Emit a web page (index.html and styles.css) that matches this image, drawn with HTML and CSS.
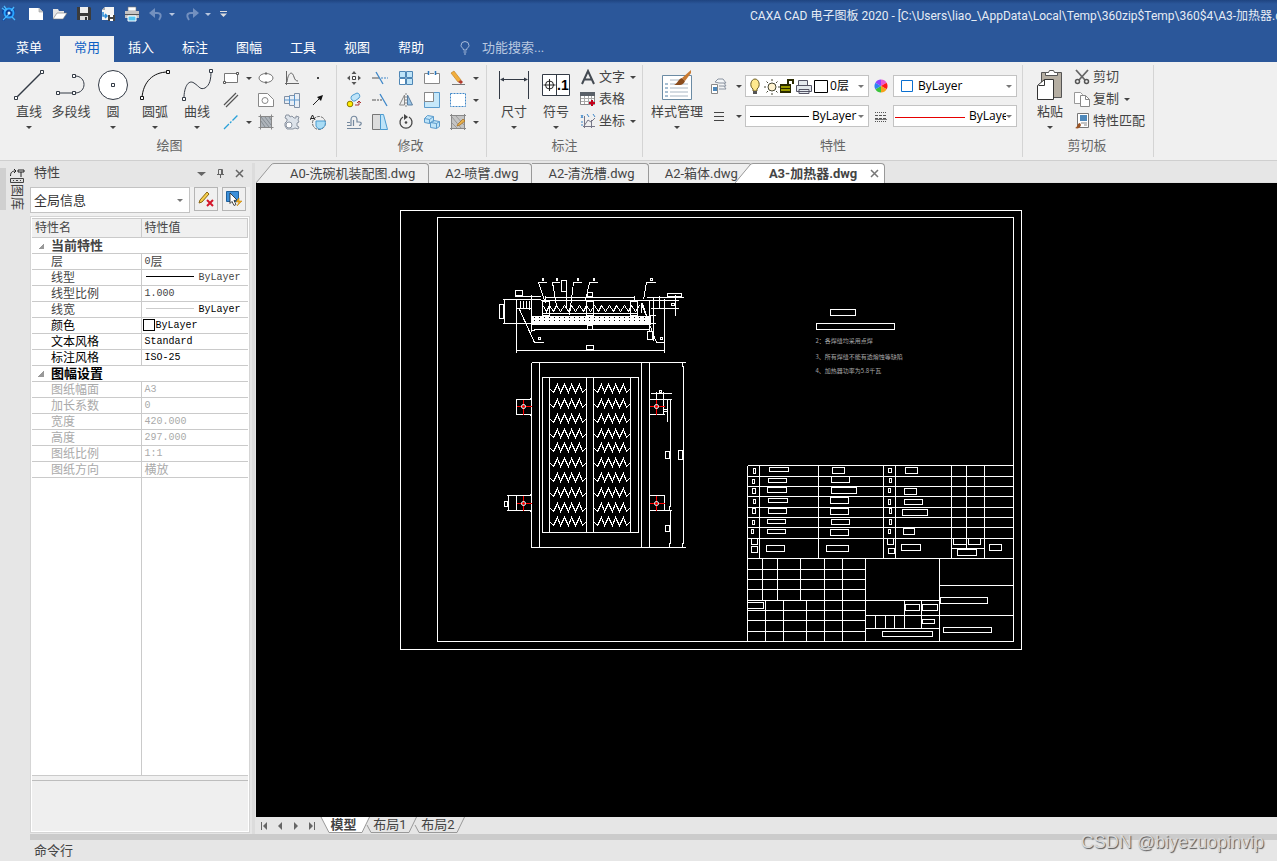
FILE: index.html
```
<!DOCTYPE html>
<html lang="zh-CN">
<head>
  <meta charset="UTF-8">
  <meta name="viewport" content="width=device-width, initial-scale=1.0">
  <title>CAXA CAD 电子图板 2020</title>
  <link rel="stylesheet" href="styles.css">
</head>
<body>
<header class="topbar">
  <div class="titlebar">
    <div class="quick">
      <svg class="logo" width="18" height="18" viewBox="0 0 18 18"><path d="M3 3l4 1c4-3 8-1 8 3s-4 6-7 4L4 16l-2-1 3-4L2 8z" fill="#0b3f9a"/><circle cx="9" cy="8" r="4.500" fill="none" stroke="#2aa5ff" stroke-width="2"/><path d="M2 3l4 3M4 1l3 4M14 2l-3 4M3 15l6-6M12 12l3 3" stroke="#49b8ff" stroke-width="1.300"/><circle cx="9" cy="8" r="1.500" fill="#d5efff"/></svg>
      <button aria-label="新建"><svg width="16" height="16" viewBox="0 0 16 16"><path d="M1 2h10l4 4v8H1z" fill="#fff"/><path d="M11 2v4h4" fill="#ccc" stroke="#999" stroke-width=".6"/></svg></button>
      <button aria-label="打开"><svg width="16" height="16" viewBox="0 0 16 16"><path d="M1 13V3h5l1 2h5v3" fill="#e5e5e5"/><path d="M1 13l4-6h10l-4 6z" fill="#fff" stroke="#777" stroke-width=".6"/></svg></button>
      <button aria-label="保存"><svg width="16" height="16" viewBox="0 0 16 16"><path d="M1 1h13l1 1v12H1z" fill="#3b3b3b"/><path d="M4 1h8v6H4z" fill="#eee"/><path d="M4 10h8v4H4z" fill="#ddd"/><path d="M9 11h2v3H9z" fill="#333"/></svg></button>
      <button aria-label="另存为"><svg width="16" height="16" viewBox="0 0 16 16"><path d="M5 1h9v13H2V4z" fill="#f4f4f4"/><path d="M5 1v3H2" fill="#aaa"/><path d="M3 6v4h4M5 8l2 2-2 2" fill="none" stroke="#2a8bd8" stroke-width="1.500"/><path d="M8 9h7v6H8z" fill="#444"/><path d="M10 9h3v2h-3zM10 13h3v2h-3z" fill="#fff"/></svg></button>
      <button aria-label="打印"><svg width="16" height="16" viewBox="0 0 16 16"><path d="M4 1h8v4H4z" fill="#fff" stroke="#777" stroke-width=".6"/><path d="M1 5h14v7H1z" fill="#c4c4c4"/><path d="M1 8h14v1H1z" fill="#555"/><path d="M4 10h8v5H4z" fill="#53c6f2" stroke="#fff"/></svg></button>
      <button aria-label="撤销" class="dim"><svg width="16" height="16" viewBox="0 0 16 16"><path d="M7 2L1 7l6 5z" fill="#7390bf"/><path d="M5 7h4c4 0 5 3 2 7" fill="none" stroke="#7390bf" stroke-width="2"/></svg><i class="caret"></i></button>
      <button aria-label="重做" class="dim"><svg width="16" height="16" viewBox="0 0 16 16"><path d="M9 2l6 5-6 5z" fill="#7390bf"/><path d="M11 7H7c-4 0-5 3-2 7" fill="none" stroke="#7390bf" stroke-width="2"/></svg><i class="caret"></i></button>
      <button aria-label="自定义" class="more"><svg width="7" height="7" viewBox="0 0 7 7"><path d="M0 .5h7" stroke="#ddd"/><path d="M0 2.500h7L3.500 6z" fill="#ddd"/></svg></button>
    </div>
    <div class="title">CAXA CAD 电子图板 2020 - [C:\Users\liao_\AppData\Local\Temp\360zip$Temp\360$4\A3-加热器.dwg]</div>
  </div>
  <nav class="menu">
    <button class="menu-file">菜单</button>
    <button class="active">常用</button>
    <button>插入</button>
    <button>标注</button>
    <button>图幅</button>
    <button>工具</button>
    <button>视图</button>
    <button>帮助</button>
    <label class="search">
      <svg width="10" height="14" viewBox="0 0 10 14"><path d="M3.500 9C3.500 7 1 6.500 1 4.500a4 4 0 0 1 8 0C9 6.500 6.500 7 6.500 9zM3.500 11h3M4 13h2" fill="none" stroke="#a9bddc"/></svg>
      <input type="text" placeholder="功能搜索..." aria-label="功能搜索">
    </label>
  </nav>
</header>

<section class="ribbon">
  <div class="group group-draw">
    <div class="tools">
      <button class="big"><svg width="32" height="32" viewBox="0 0 32 32"><path d="M3 29L29 3" stroke="#333a45" stroke-width="1.500"/><g fill="#fff" stroke="#333a45"><path d="M1.500 27.500h3v3h-3zM27.500 1.500h3v3h-3z"/></g></svg>直线<i class="caret"></i></button>
      <button class="big"><svg width="32" height="32" viewBox="0 0 32 32"><path d="M3 24h17c12 0 12-17 0-17" fill="none" stroke="#333a45"/><g fill="#fff" stroke="#333a45"><path d="M1.500 22.500h3v3h-3zM17.500 22.500h3v3h-3zM17.500 5.500h3v3h-3z"/></g></svg>多段线</button>
      <button class="big"><svg width="32" height="32" viewBox="0 0 32 32"><circle cx="16" cy="16" r="14.500" fill="#fff" stroke="#333a45"/><path d="M14.500 14.500h3v3h-3z" fill="#fff" stroke="#333a45"/></svg>圆<i class="caret"></i></button>
      <button class="big"><svg width="32" height="32" viewBox="0 0 32 32"><path d="M3 29C4 13 14 3 29 3" fill="none" stroke="#111"/><g fill="#fff" stroke="#111"><path d="M1.500 27.500h3v3h-3zM27.500 1.500h3v3h-3z"/></g></svg>圆弧<i class="caret"></i></button>
      <button class="big"><svg width="32" height="32" viewBox="0 0 32 32"><path d="M3 29C3 19 7 10 13 14c6 4 6 7 11 5 5-3 6-9 6-17" fill="none" stroke="#333a45"/><g fill="#fff" stroke="#333a45"><path d="M1.500 28.500h3v3h-3zM28.500 .5h3v3h-3z"/></g></svg>曲线<i class="caret"></i></button>
      <div class="grid-draw">
        <button aria-label="矩形"><svg width="16" height="16" viewBox="0 0 16 16"><path d="M1.500 3.500h13v9h-13z" fill="#fff" stroke="#777"/><path d="M.5 11.500h2v2h-2zM13.500 2.500h2v2h-2z" fill="#fff" stroke="#555"/></svg></button>
        <i class="caret"></i>
        <button aria-label="椭圆"><svg width="16" height="16" viewBox="0 0 16 16"><ellipse cx="8" cy="8" rx="7" ry="4.500" fill="#fff" stroke="#777"/><path d="M7 2.500h2v2H7zM7 11.500h2v2H7z" fill="#666"/></svg></button>
        <button aria-label="公式曲线"><svg width="16" height="16" viewBox="0 0 16 16"><path d="M2.500 1v14M1 13.500h14M3 12c1-9 5-12 7-5 1 3 2 4 4 4" fill="none" stroke="#666"/></svg></button>
        <button aria-label="点"><svg width="16" height="16" viewBox="0 0 16 16"><path d="M7 7h2v2H7z" fill="#444"/></svg></button>
        <button aria-label="平行线"><svg width="16" height="16" viewBox="0 0 16 16"><path d="M1 13L13 1M3 15L15 3" stroke="#555" stroke-width="1.200"/></svg></button>
        <i></i>
        <button aria-label="孔"><svg width="16" height="16" viewBox="0 0 16 16"><path d="M.5 1.500h9l6 6v7H.5z" fill="#fff" stroke="#888"/><circle cx="7" cy="8.500" r="3" fill="#fff" stroke="#888"/></svg></button>
        <button aria-label="轴"><svg width="16" height="16" viewBox="0 0 16 16"><path d="M.5 4.500h5v-1h5v-2h5v14h-5v-2h-5v-2h-5z" fill="#e8eef5" stroke="#8190a5"/><path d="M5.500 4v8M10.500 3v10M0 8h16" stroke="#5b95cb"/></svg></button>
        <button aria-label="箭头"><svg width="16" height="16" viewBox="0 0 16 16"><path d="M3 13l8-8" stroke="#222"/><path d="M13 3l-2 6-4-4z" fill="#111"/></svg></button>
        <button aria-label="中心线"><svg width="16" height="16" viewBox="0 0 16 16"><path d="M1 15L15 1" stroke="#2aa1d9" stroke-width="1.300" stroke-dasharray="7 1.500 2 1.500"/></svg></button>
        <i class="caret"></i>
        <button aria-label="剖面线"><svg width="16" height="16" viewBox="0 0 16 16"><path d="M2.500 2.500h11v11h-11z" fill="#aeb4ba"/><path d="M.5 2.500h15M.5 13.500h15M2.500 .5v15M13.500 .5v15" stroke="#888"/><path d="M3 7l4 6M3 3l8 10M7 3l6 8M11 3l2 3" stroke="#747b83" stroke-width=".7"/></svg></button>
        <button aria-label="齿轮"><svg width="16" height="16" viewBox="0 0 16 16"><path d="M2 1h3l1 2 2-1 2 2 2 0 0-2 3 1-1 3 1 2-2 1 0 3 2 1-1 2-3-1-2 1H3l-2-3 0-3 2-2V5L1 4z" fill="#dde3ea" stroke="#8a93a0"/><circle cx="5" cy="11" r="3" fill="#fff" stroke="#8a93a0"/></svg></button>
        <button aria-label="局部放大"><svg width="16" height="16" viewBox="0 0 16 16"><circle cx="9" cy="9" r="6.500" fill="none" stroke="#666" stroke-dasharray="3 1"/><path d="M6 7h9a6 6 0 0 1-6 8 5 5 0 0 1-3-3z" fill="#a9dcf5" stroke="#4b9bd0"/><path d="M0 6l2.500-5L5 6M1 4.500h3" fill="none" stroke="#222"/></svg></button>
      </div>
    </div>
    <div class="group-name">绘图</div>
  </div>

  <div class="group group-modify">
    <div class="tools">
      <div class="grid-modify">
        <button aria-label="平移"><svg width="16" height="16" viewBox="0 0 16 16"><path d="M6.500 6.500h3v3h-3z" fill="#fff" stroke="#444"/><path d="M8 1l2.500 3h-5zM8 15l2.500-3h-5zM1 8l3-2.500v5zM15 8l-3-2.500v5z" fill="#555"/></svg></button>
        <button aria-label="裁剪"><svg width="16" height="16" viewBox="0 0 16 16"><path d="M0 8h7" stroke="#555"/><path d="M9 8h7" stroke="#3e87c9" stroke-dasharray="2 1"/><path d="M4 2l7 12" stroke="#3e87c9" stroke-width="1.300"/></svg></button>
        <button aria-label="阵列"><svg width="16" height="16" viewBox="0 0 16 16"><g fill="#bfe4f8" stroke="#4e86b5"><path d="M1.500 1.500h6v6h-6zM8.500 1.500h6v6h-6zM8.500 8.500h6v6h-6z"/><path d="M1.500 8.500h6v6h-6z" fill="#fff"/></g></svg></button>
        <button aria-label="打断"><svg width="16" height="16" viewBox="0 0 16 16"><path d="M4 3.500H.5v10h15v-10H12M6 3.500h4" fill="#fff" stroke="#888"/><path d="M4.500 1v4M11.500 1v4" stroke="#2b77bd" stroke-width="1.500"/></svg></button>
        <button aria-label="删除"><svg width="16" height="16" viewBox="0 0 16 16"><path d="M1 3l3-2 7 9-3 2z" fill="#f2ae3c" stroke="#b9781d" stroke-width=".6"/><path d="M8 12l3-2 2 2-2 2z" fill="#b23a2d"/><path d="M2 14.500h13" stroke="#777"/></svg></button>
        <i class="caret"></i>
        <button aria-label="复制"><svg width="16" height="16" viewBox="0 0 16 16"><circle cx="4" cy="12" r="2.800" fill="#ffeb00" stroke="#8a7a00"/><path d="M6 8a3 3 0 0 1 1-5l4-2a3 3 0 0 1 2 5L9 9a3 3 0 0 1-3-1z" fill="#bfe4f8" stroke="#4b9bd0"/><path d="M9 13h4v-3M11 11l2-2 2 2" fill="none" stroke="#a33"/></svg></button>
        <button aria-label="延伸"><svg width="16" height="16" viewBox="0 0 16 16"><path d="M0 8h4" stroke="#555"/><path d="M5 8h5" stroke="#555" stroke-dasharray="2 1"/><path d="M8 2l7 12" stroke="#3e87c9" stroke-width="1.300"/></svg></button>
        <button aria-label="镜像"><svg width="16" height="16" viewBox="0 0 16 16"><path d="M6.500 3v10h-5z" fill="#eee" stroke="#888"/><path d="M9.500 3v10h5z" fill="#9cc6e8" stroke="#5b7fa0"/><path d="M8 1v14" stroke="#888" stroke-dasharray="2 1"/></svg></button>
        <button aria-label="缩放"><svg width="16" height="16" viewBox="0 0 16 16"><path d="M.5 .5h15v15H.5z" fill="#c6e8fa" stroke="#5b9bcc"/><path d="M.5 .5h9v9h-9z" fill="#fff" stroke="#888"/></svg></button>
        <button aria-label="选择"><svg width="16" height="16" viewBox="0 0 16 16"><path d="M.5 1.500h15v13H.5z" fill="#fff" stroke="#3e87c9" stroke-dasharray="2 1"/></svg></button>
        <i class="caret"></i>
        <button aria-label="等距线"><svg width="16" height="16" viewBox="0 0 16 16"><path d="M1 11.500h4V6c0-5 6-5 6 0v2h2c3 0 3 3 0 3.500M1 14.500h14M1 8.500h3M7.500 12V6" fill="none" stroke="#74889e" stroke-width="1.200"/></svg></button>
        <button aria-label="拉伸"><svg width="16" height="16" viewBox="0 0 16 16"><path d="M.5 .5h8v15h-8z" fill="#ddd" stroke="#777"/><path d="M8.500 .5h3l4 15h-7z" fill="#bfe4f8" stroke="#4b9bd0"/></svg></button>
        <button aria-label="旋转"><svg width="16" height="16" viewBox="0 0 16 16"><path d="M5 3a6 6 0 1 0 6 0" fill="none" stroke="#444" stroke-width="1.300"/><path d="M6 0l4 3-4 3z" fill="#444"/><circle cx="8" cy="8.500" r="1.300" fill="#444"/></svg></button>
        <button aria-label="分解"><svg width="16" height="16" viewBox="0 0 16 16"><path d="M.5 4.500l3-3 6 1v5l-4 2-5-1zM.5 4.500l5 1v4M5.500 5.500l4-3M6.500 8.500l3-2 6 1v5l-3 2-6-1zM6.500 8.500l6 1v5M12.500 9.500l3-2" fill="#bfe4f8" stroke="#5b9bcc"/></svg></button>
        <button aria-label="填充编辑"><svg width="16" height="16" viewBox="0 0 16 16"><path d="M1.500 1.500h13v13h-13z" fill="#c4c4c4"/><path d="M0 1.500h16M0 14.500h16M1.500 0v16M14.500 0v16" stroke="#888"/><path d="M2 9l5 5M2 3l9 11M6 2l8 9" stroke="#888" stroke-width=".7"/><path d="M8 10l5-5 2 2-5 4-3 1z" fill="#e6b04c" stroke="#a56c1d" stroke-width=".7"/></svg></button>
        <i class="caret"></i>
      </div>
    </div>
    <div class="group-name">修改</div>
  </div>

  <div class="group group-dim">
    <div class="tools">
      <button class="big"><svg width="32" height="32" viewBox="0 0 32 32"><path d="M1.500 2v28M30.500 2v28" stroke="#333a45"/><path d="M3 10.500h26" stroke="#333a45"/><path d="M2 10.500l4-2v4zM30 10.500l-4-2v4z" fill="#333a45"/></svg>尺寸<i class="caret"></i></button>
      <button class="big"><svg width="32" height="32" viewBox="0 0 32 32"><path d="M2.500 5.500h27v21h-27zM16.500 5.500v21" fill="#fff" stroke="#333a45"/><circle cx="9.500" cy="16" r="4" fill="none" stroke="#222"/><path d="M9.500 10v12M3.500 16h12" stroke="#222"/><text x="17" y="21" class="icon-text">.1</text></svg>符号<i class="caret"></i></button>
      <div class="list">
        <button><svg width="16" height="16" viewBox="0 0 16 16"><path d="M2 15L8 2l6 13M4.500 10.500h7" fill="none" stroke="#444a52" stroke-width="2"/></svg>文字<i class="caret"></i></button>
        <button><svg width="16" height="16" viewBox="0 0 16 16"><path d="M.5 1.500h14v12H.5z" fill="#fff" stroke="#888"/><path d="M0 1h15v4H0z" fill="#5a6068"/><path d="M1 7.500h13M1 10.500h13M4.500 5v8M8.500 5v8M11.500 5v8" stroke="#aaa"/><path d="M12 9v6M9 12h6" stroke="#c4001a" stroke-width="2"/></svg>表格</button>
        <button><svg width="16" height="16" viewBox="0 0 16 16"><path d="M4.500 3v12M3 13.500h12M4 13l4-6 3 2 4-4M11.500 7v8" fill="none" stroke="#778"/><path d="M1 2l2 3M3 2L1 5M7 1l2 3M13 1l2 3M1 9h2M1 12h2" stroke="#3e87c9"/></svg>坐标<i class="caret"></i></button>
      </div>
    </div>
    <div class="group-name">标注</div>
  </div>

  <div class="group group-props">
    <div class="tools">
      <button class="big wide"><svg width="32" height="32" viewBox="0 0 32 32"><path d="M1.500 6.500h29v24h-29z" fill="#fff" stroke="#6b8ba4"/><path d="M4 15h3M4 19h3M4 23h3M4 27h3" stroke="#4f7fa6"/><path d="M9 11h14M9 15h18M9 19h18M9 23h18M9 27h18" stroke="#a9b6c3"/><path d="M30 1l-9 8 3 3 6-8z" fill="#c87a32"/><path d="M21 9l3 3c-2 5-6 4-11 4 4-2 4-6 8-7z" fill="#8a4b1c"/></svg>样式管理<i class="caret"></i></button>
      <div class="grid-props">
        <button aria-label="图层"><svg width="16" height="16" viewBox="0 0 16 16"><path d="M4 4l3-3h5l3 4H8zM8 8h7l-2-3M8 11h7l-2-3" fill="#f4f6f8" stroke="#8a93a0"/><path d="M.5 6.500h6v9h-6z" fill="#fff" stroke="#888"/><path d="M2 9h4v4H2z" fill="#4d88bb"/></svg></button>
        <i class="caret"></i>
        <div class="combo">
          <svg width="84" height="18" viewBox="0 0 84 18"><path d="M7 14V12C3 9 5 2 9 2s6 7 2 10v2z" fill="#ffe98e" stroke="#6b5a20"/><path d="M7 14h4v3H7z" fill="#555"/><circle cx="26" cy="10" r="4" fill="#fff3d0" stroke="#443"/><path d="M26 2v2M26 16v2M18 10h2M32 10h2M20.500 4.500l1.500 1.500M30 14l1.500 1.500M31.500 4.500L30 6M20.500 15.500L22 14" stroke="#443"/><path d="M35 8h9v7h-9zM42 9V3h5v4" fill="none" stroke="#2a2a00" stroke-width="2"/><path d="M35 9h9v5h-9z" fill="#9a9a00"/><path d="M35 11.500h9" stroke="#2a2a00"/><path d="M52.500 8V3.500h9V8M50.500 8.500h15v6h-15zM53 12.500h10v4H53z" fill="#e4e9ee" stroke="#556"/><path d="M68.500 3.500h13v12h-13z" fill="#fff" stroke="#000"/></svg>
          <select aria-label="图层"><option>0层</option></select><i class="caret"></i>
        </div>
        <svg class="mid" width="14" height="14" viewBox="0 0 14 14"><path d="M7 7L7 .5A6.500 6.500 0 0 1 12.600 3.700z" fill="#e85ad0"/><path d="M7 7l5.600-3.300a6.500 6.500 0 0 1 0 6.600z" fill="#ff1818"/><path d="M7 7l5.600 3.300A6.500 6.500 0 0 1 7 13.500z" fill="#f6a21b"/><path d="M7 7v6.500a6.500 6.500 0 0 1-5.600-3.200z" fill="#3cc43c"/><path d="M7 7l-5.600 3.300a6.500 6.500 0 0 1 0-6.600z" fill="#2e84f0"/><path d="M7 7L1.400 3.700A6.500 6.500 0 0 1 7 .5z" fill="#8c46ff"/></svg>
        <div class="combo">
          <svg width="24" height="18" viewBox="0 0 24 18"><path d="M7.500 3.500h11v11h-11z" fill="#fff" stroke="#0a6fd0"/></svg>
          <select aria-label="颜色"><option>ByLayer</option></select><i class="caret"></i>
        </div>
        <button aria-label="线型管理"><svg width="16" height="16" viewBox="0 0 16 16"><path d="M3 4.500h10M3 8.500h10M3 12.500h10" stroke="#444"/></svg></button>
        <i class="caret"></i>
        <div class="combo">
          <svg width="66" height="18" viewBox="0 0 66 18"><path d="M4 9.500h59" stroke="#000"/></svg>
          <select aria-label="线型"><option>ByLayer</option></select><i class="caret"></i>
        </div>
        <svg class="mid" width="14" height="14" viewBox="0 0 14 14"><path d="M1 3.500h12M1 12.500h12" stroke="#555" stroke-dasharray="1 1"/><path d="M1 6.500h12M1 9.500h12" stroke="#555" stroke-dasharray="3 1"/><path d="M1 10.500h12" stroke="#777"/></svg>
        <div class="combo">
          <svg width="75" height="18" viewBox="0 0 75 18"><path d="M1 10.500h70" stroke="#e60000"/></svg>
          <select aria-label="线宽"><option>ByLayer</option></select><i class="caret"></i>
        </div>
      </div>
    </div>
    <div class="group-name">特性</div>
  </div>

  <div class="group group-clip">
    <div class="tools">
      <button class="big"><svg width="32" height="32" viewBox="0 0 32 32"><path d="M7.500 3.500h20v25h-20z" fill="#b5aea2" stroke="#555"/><path d="M11.500 6.500v-3h3l1-2h4l1 2h3v3z" fill="#fff" stroke="#555"/><path d="M10.500 10.500h9v20h-16v-14z" fill="#fff" stroke="#333"/><path d="M10.500 10.500v6h-6" fill="none" stroke="#333"/></svg>粘贴<i class="caret"></i></button>
      <div class="list">
        <button><svg width="16" height="16" viewBox="0 0 16 16"><path d="M2 1l9 10M14 1L5 11" stroke="#666" stroke-width="1.800"/><circle cx="3.500" cy="12.500" r="2" fill="none" stroke="#555" stroke-width="1.500"/><circle cx="12.500" cy="12.500" r="2" fill="none" stroke="#555" stroke-width="1.500"/></svg>剪切</button>
        <button><svg width="16" height="16" viewBox="0 0 16 16"><path d="M.5 1.500h6l2 2v9h-8z" fill="#fff" stroke="#999"/><path d="M6.500 4.500h5l4 4v7h-9z" fill="#fff" stroke="#888"/><path d="M11.500 4.500v4h4" fill="none" stroke="#888"/></svg>复制<i class="caret"></i></button>
        <button><svg width="16" height="16" viewBox="0 0 16 16"><path d="M3.500 .5h11v14h-11z" fill="#fff" stroke="#777"/><path d="M6 2h7v6H6z" fill="#4d88bb"/><path d="M7 10h6M10 12h3" stroke="#888" fill="none"/><path d="M1 15c3-1 2-5 5-5l1 2c-1 3-3 4-6 3z" fill="#9b5424"/></svg>特性匹配</button>
      </div>
    </div>
    <div class="group-name">剪切板</div>
  </div>
</section>

<main class="workspace">
  <aside class="rail">
    <div class="rail-edge"></div>
    <button class="rail-tab">
      <svg width="16" height="16" viewBox="0 0 16 16"><path d="M1.500 8c0-4 2-5 5-5M5 1l2 2-2 2M9 2h6v2H9zM12 4v5" fill="none" stroke="#222"/><path d="M1.500 10.500h13v4h-13zM4 12.500h1M7 12.500h2M11 12.500h1" fill="#ddd" stroke="#444"/></svg>
      <span>图库</span>
    </button>
  </aside>

  <section class="panel">
    <div class="panel-head">
      <h2>特性</h2>
      <button aria-label="菜单"><svg width="9" height="9" viewBox="0 0 9 9"><path d="M0 3h9L4.500 7z" fill="#666"/></svg></button>
      <button aria-label="固定"><svg width="9" height="9" viewBox="0 0 9 9"><path d="M2.500 5V.5h4V5M1 5.500h7M4.500 6v3M5.500 1v4" fill="none" stroke="#666"/></svg></button>
      <button aria-label="关闭"><svg width="9" height="9" viewBox="0 0 9 9"><path d="M1 1l7 7M8 1L1 8" stroke="#666" stroke-width="1.500"/></svg></button>
    </div>
    <div class="panel-tools">
      <div class="combo scope">
        <select aria-label="对象"><option>全局信息</option></select><i class="caret"></i>
      </div>
      <button aria-label="清除"><svg width="18" height="18" viewBox="0 0 18 18"><path d="M2 13l1-3 7-8 2 2-7 8z" fill="#f6cf4a" stroke="#8a6514"/><path d="M10 10l6 6M16 10l-6 6" stroke="#d3152a" stroke-width="2"/></svg></button>
      <button aria-label="选择"><svg width="18" height="18" viewBox="0 0 18 18"><path d="M1.500 1.500h12v10h-12z" fill="#3c8fd9" stroke="#1d5f9c"/><path d="M5 3l7 7-3 .5 2 4-2 1-2-4-2 2z" fill="#fff" stroke="#222" stroke-width=".8"/><path d="M14 8l-3 4h3l-2 4 5-5h-3z" fill="#f6b01c" stroke="#b97a00" stroke-width=".5"/></svg></button>
    </div>
    <div class="props-wrap">
      <table class="props">
        <colgroup><col class="col-name"><col></colgroup>
        <thead><tr><th>特性名</th><th>特性值</th></tr></thead>
        <tbody>
          <tr class="section"><td colspan="2">当前特性</td></tr>
          <tr><td>层</td><td>0<span>层</span></td></tr>
          <tr><td>线型</td><td><hr class="line">ByLayer</td></tr>
          <tr><td>线型比例</td><td>1.000</td></tr>
          <tr><td>线宽</td><td class="on"><hr class="line thin">ByLayer</td></tr>
          <tr class="on"><td>颜色</td><td class="swatched"><i class="swatch"></i>ByLayer</td></tr>
          <tr class="on"><td>文本风格</td><td>Standard</td></tr>
          <tr class="on"><td>标注风格</td><td>ISO-25</td></tr>
          <tr class="section on"><td colspan="2">图幅设置</td></tr>
          <tr class="off"><td>图纸幅面</td><td>A3</td></tr>
          <tr class="off"><td>加长系数</td><td>0</td></tr>
          <tr class="off"><td>宽度</td><td>420.000</td></tr>
          <tr class="off"><td>高度</td><td>297.000</td></tr>
          <tr class="off"><td>图纸比例</td><td>1:1</td></tr>
          <tr class="off"><td>图纸方向</td><td><span>横放</span></td></tr>
          <tr class="rest"><td></td><td></td></tr>
        </tbody>
      </table>
      <div class="hint"></div>
    </div>
  </section>

  <div class="splitter"></div>

  <section class="docs">
    <div class="doc-tabs">
      <svg width="18" height="20" viewBox="0 0 18 20"><path d="M0 20L15 2l3-1.500V20z" fill="#efefef"/><path d="M0 20L15 2q1-1.500 3-1.500" fill="none" stroke="#999"/></svg>
      <button>A0-洗碗机装配图.dwg</button>
      <button>A2-喷臂.dwg</button>
      <button>A2-清洗槽.dwg</button>
      <button>A2-箱体.dwg</button>
      <svg class="lap" width="18" height="20" viewBox="0 0 18 20"><path d="M0 20L15 2l3-1.500V20z" fill="#fff"/><path d="M0 20L15 2q1-1.500 3-1.500" fill="none" stroke="#999"/></svg>
      <button class="active">A3-加热器.dwg<svg width="9" height="9" viewBox="0 0 9 9"><path d="M1 1l7 7M8 1L1 8" stroke="#777" stroke-width="1.500"/></svg></button>
    </div>

    <div class="canvas">
      <!-- model space: one unit is one pixel -->
      <svg width="1021" height="634" viewBox="255.500 182.500 1021 634">
        <defs>
          <path id="zig" d="M0 4l4 4 4-8 3 8 4-8 4 8 3-8 4 8 4-8 3 8 4-4"/>
          <g id="zigs">
            <use href="#zig" y="384"/><use href="#zig" y="399"/><use href="#zig" y="414"/><use href="#zig" y="429"/><use href="#zig" y="443"/>
            <use href="#zig" y="458"/><use href="#zig" y="473"/><use href="#zig" y="488"/><use href="#zig" y="503"/><use href="#zig" y="517"/>
          </g>
        </defs>
        <g class="ink">
          <!-- sheet frames -->
          <path d="M400 210H1021V649H400zM437 217H1013V641H437z"/>

          <!-- side view -->
          <path d="M516 299V352M516 350H664M664 298V352M586 345h7v4h-7z"/>
          <path d="M499 304h4v14h-4zM504 299V323M502 323H531M502 299H540M515 290h7v5h-7zM514 296H540M520 300V308M523 300V308M526 300V308M529 300V309M531 294V331M516 308H531"/>
          <path d="M519 309L534 342H543M538 337h2v2h-2z"/>
          <path d="M545 297H634M545 295V300M634 295V300M540 300H650M542 301h7v14h-7zM586 301h7v14h-7zM630 301h7v14h-7zM587 292h5v4h-5zM542 313H637M649 300V329"/>
          <path d="M543 306l3 5 3-6 4 6 3-6 4 6 4-6 4 6 3-6 4 6 4-6 4 6 3-6 4 6 4-6 4 6 3-6 4 6 4-6 4 6 3-6 4 6 4-6 4 6 3-6 4 6 4-6"/>
          <path d="M531 330h3v-1H648l2 1M587 325h5v4h-5z"/>
          <path d="M546 282H538L545 303M542 278h1v2h-1zM559 282H552L556 305M556 278h1v2h-1zM561 280h5v11h-5zM566 279V307M581 282H573L569 315M577 278h1v2h-1zM597 282H589L585 300M593 278h1v2h-1zM655 282H646L643 299M650 278h2v2h-2z"/>
          <path d="M646 297H683M667 293h14v3h-14zM675 294V315M640 300H678M653 296V340M659 295V308M650 308H678M671 303h3v2h-3zM649 315H655M649 323H655M647 331h5v8h-5zM641 303L656 342H664M660 337h2v2h-2zM641 303V312M642 303L646 315"/>

          <!-- plan view -->
          <path d="M531 362H685M531 547H685M531 362V547M539 362V547M641 362V547M649 362V547M682 362V366H683V543H682V547"/>
          <path d="M542 377H638V532H542zM549 377V532M586 377V532M593 377V532M630 377V532"/>
          <path d="M531 399H516V414H531M529 398h2M529 415h2v2M531 495H506M506 510H531M516 495V510M508 495V510M504 501h3v5h-3zM529 494h2M529 511h2"/>
          <path d="M649 399H671M649 414H664M649 495H664V510M649 510H671M650 393H671M659 390h2v2h-2zM656 391V399M663 391V414M667 399V421M663 409h4v2h-4zM669 400h1V506h-1v4h1V543h-1v4M665 451h4v7h-4zM678 450h4v9h-4zM665 525h4v6h-4z"/>
          <use href="#zigs" x="549"/>
          <use href="#zigs" x="593"/>

          <!-- parts list -->
          <path d="M747 465H1013M747 476H1013M747 486H1013M747 496H1013M747 507H1013M747 517H1013M747 527H1013M747 538H1013M747 558H1013M951 548H984"/>
          <path d="M747 465V641M759 465V558M818 465V558M883 465V558M895 465V558M951 465V558M966 465V548M984 465V558"/>
          <path d="M753 468h2v5h-2zM769 467h19v4h-19zM832 467h12v6h-12zM888 468h3v4h-3zM905 467h12v6h-12z"/>
          <path d="M752 479h2v4h-2zM768 478h18v4h-18zM831 476h18v6h-18zM889 478h2v4h-2z"/>
          <path d="M752 488h3v5h-3zM767 487h19v5h-19zM831 487h25v6h-25zM888 488h2v4h-2zM904 488h12v6h-12z"/>
          <path d="M753 499h2v4h-2zM768 498h19v4h-19zM830 497h18v6h-18zM888 499h2v5h-2zM904 499h18v5h-18z"/>
          <path d="M752 508h3v5h-3zM768 508h18v5h-18zM830 508h18v6h-18zM889 508h2v5h-2zM902 509h25v6h-25z"/>
          <path d="M752 520h2v4h-2zM767 519h18v4h-18zM831 519h18v5h-18zM889 519h2v5h-2z"/>
          <path d="M751 529h2v4h-2zM767 529h18v4h-18zM830 529h18v6h-18zM888 529h2v4h-2zM903 528h11v6h-11z"/>
          <path d="M751 538h6v6h-6zM751 546h6v6h-6zM766 545h18v6h-18zM826 545h22v6h-22zM887 538h6v6h-6zM888 548h6v5h-6zM901 544h19v6h-19zM953 538h13v6h-13zM968 538h12v6h-12zM957 549h19v6h-19zM989 544h12v6h-12z"/>

          <!-- title block -->
          <path d="M747 569H865M747 579H865M747 589H865M747 600H939M747 610H865M747 620H865M747 631H865"/>
          <path d="M762 558V600M777 558V600M800 558V600M824 558V641M842 558V641M865 558V641M765 600V641M783 600V641M806 600V641M747 602h16v6h-16z"/>
          <path d="M939 558V641M865 615H939M865 628H939M904 600V628M921 600V628M875 615V628M885 615V628M894 615V628M905 604h14v6h-14zM922 604h15v6h-15zM922 619h12v4h-12zM882 631h50v5h-50z"/>
          <path d="M939 585H1013M939 615H1013M940 597h47v6h-47zM943 627h48v5h-48z"/>

          <!-- placeholders above the notes -->
          <path d="M830 309h25v6h-25zM816 323h78v6h-78z"/>
        </g>

        <rect class="slab" x="531" y="315" width="119" height="9"/>
        <path class="holes" d="M533 317H648M533 320H648"/>

        <path class="axis" d="M516 406H531M523 399V414M516 503H531M523 495V510M649 406H664M656 399V414M649 503H664M656 495V510"/>
        <g class="bores"><circle cx="523" cy="406" r="2"/><circle cx="523" cy="503" r="2"/><circle cx="656" cy="406" r="2"/><circle cx="656" cy="503" r="2"/></g>

        <g class="notes">
          <text x="815" y="342">2：各焊缝均采用点焊</text>
          <text x="815" y="358">3、所有焊缝不能有透熔蚀等缺陷</text>
          <text x="815" y="372">4、加热器功率为5.8千瓦</text>
        </g>
      </svg>
    </div>

    <div class="sheet-tabs">
      <button class="nav" aria-label="第一个"><svg width="8" height="8" viewBox="0 0 8 8"><path d="M1.500 0v8" stroke="#666"/><path d="M7 0v8L3 4z" fill="#666"/></svg></button>
      <button class="nav" aria-label="上一个"><svg width="8" height="8" viewBox="0 0 8 8"><path d="M6 0v8L2 4z" fill="#666"/></svg></button>
      <button class="nav" aria-label="下一个"><svg width="8" height="8" viewBox="0 0 8 8"><path d="M2 0v8l4-4z" fill="#666"/></svg></button>
      <button class="nav" aria-label="最后一个"><svg width="8" height="8" viewBox="0 0 8 8"><path d="M6.500 0v8" stroke="#666"/><path d="M1 0v8l4-4z" fill="#666"/></svg></button>
      <button class="sheet active"><svg width="49" height="16" viewBox="0 0 49 16"><path d="M0 0l8 15.500h33L48.500 0" fill="#fff" stroke="#999"/></svg><span>模型</span></button>
      <button class="sheet"><svg width="49" height="16" viewBox="0 0 49 16"><path d="M1 8l4 7.500h38L50.500 0" fill="none" stroke="#999"/></svg><span>布局1</span></button>
      <button class="sheet"><svg width="49" height="16" viewBox="0 0 49 16"><path d="M1 8l4 7.500h38L50.500 0" fill="none" stroke="#999"/></svg><span>布局2</span></button>
    </div>
  </section>
</main>

<footer class="command">命令行</footer>
<div class="watermark">CSDN @biyezuopinvip</div>
</body>
</html>
```
FILE: styles.css
```
* {
  box-sizing: border-box;
}

body {
  margin: 0;
  min-height: 100vh;
  display: flex;
  flex-direction: column;
  overflow: hidden;
  position: relative;
  background: #e6e6e6;
  color: #444;
  font: 13px/18px Roboto, "Noto Sans CJK SC", sans-serif;
}

button {
  padding: 0;
  border: 0;
  background: none;
  color: inherit;
  font: inherit;
  white-space: nowrap;
}

svg {
  display: block;
  flex: none;
}

.caret {
  flex: none;
  width: 5px;
  border: solid transparent;
  border-width: 3px 3px 0;
  border-top-color: #444;
  place-self: center;
}

/* title bar and menu */
.topbar {
  background: linear-gradient(#1f4480, #2b579a 4px);
  color: #fff;
}

.titlebar {
  display: grid;
  grid-template-columns: 750px 1fr;
  align-items: center;
  height: 36px;
  padding-bottom: 8px;
}

.title {
  overflow: hidden;
  padding-top: 4px;
  white-space: nowrap;
  font-size: 12px;
  color: #e6ecf5;
}

.quick {
  display: flex;
  align-items: center;
  gap: 8px;
}

.logo {
  margin-right: 2px;
}

.quick button {
  display: flex;
  align-items: center;
  gap: 5px;
}

.quick .dim {
  margin-right: 1px;
}

.quick .caret {
  border-top-color: #b8c6de;
}

.menu {
  display: flex;
  height: 26px;
}

.menu button {
  width: 54px;
  padding-bottom: 2px;
}

.menu .menu-file {
  width: 58px;
  margin-right: 2px;
}

.menu .active {
  background: #f0f0f0;
  color: #0b60c4;
}

.search {
  display: flex;
  align-items: center;
  gap: 12px;
  margin-left: 22px;
  padding-bottom: 2px;
}

.search input {
  width: 120px;
  padding: 0;
  border: 0;
  background: none;
  color: #fff;
  font: inherit;
}

.search input::placeholder {
  color: #b9c8e0;
}

/* ribbon */
.ribbon {
  display: flex;
  height: 99px;
  padding: 3px 0;
  border-bottom: 1px solid #cfcfcf;
  background: #f0f0f0;
}

.group {
  display: flex;
  flex-direction: column;
  justify-content: space-between;
  padding-top: 2px;
  border-right: 1px solid #d4d4d4;
}

.group-draw {
  padding-left: 8px;
  padding-right: 5px;
}

.group-modify {
  padding-left: 4px;
  padding-right: 6px;
}

.group-dim {
  padding-left: 6px;
  padding-right: 6px;
}

.group-props {
  padding-left: 6px;
  padding-right: 5px;
}

.group-clip {
  padding-left: 6px;
  padding-right: 8px;
}

.group-name {
  padding-bottom: 2px;
  text-align: center;
  color: #666;
}

.tools {
  display: flex;
}

.big {
  display: flex;
  flex-direction: column;
  align-items: center;
  width: 42px;
  padding-top: 2px;
}

.big.wide {
  width: 56px;
}

.big .caret {
  margin-top: 5px;
}

.big svg {
  margin-bottom: 2px;
}

.icon-text {
  font: bold 14px "Liberation Sans", sans-serif;
  fill: #000;
}

.grid-draw,
.grid-modify {
  display: grid;
  grid-auto-rows: 22px;
}

.grid-draw {
  grid-template-columns: 26px 9px 26px 26px 26px;
}

.grid-modify {
  grid-template-columns: repeat(5, 26px) 9px;
}

.grid-draw button,
.grid-modify button,
.grid-props button {
  display: flex;
  align-items: center;
  justify-content: center;
}

.list button {
  display: flex;
  align-items: center;
  gap: 3px;
  height: 22px;
  padding: 0 0 2px 3px;
}

.list .caret {
  margin-left: 2px;
}

.grid-props {
  display: grid;
  grid-template-columns: 27px 13px 124px 24px 124px;
  grid-auto-rows: 22px;
  row-gap: 8px;
  padding-top: 8px;
}

.mid {
  place-self: center;
}

.combo {
  display: flex;
  align-items: center;
  min-width: 0;
  padding-right: 4px;
  border: 1px solid #c3c3c3;
  background: #fff;
}

.combo select {
  flex: 1;
  min-width: 0;
  padding: 0;
  border: 0;
  appearance: none;
  background: none;
  color: #000;
  font: 12px/18px "Open Sans", "Noto Sans CJK SC", sans-serif;
  text-overflow: clip;
}

.combo .caret {
  border-top-color: #777;
}

/* workspace */
.workspace {
  flex: 1;
  display: grid;
  grid-template-columns: 30px 220px 6px 1fr;
  padding-top: 2px;
}

.rail {
  display: flex;
  gap: 3px;
  padding-top: 5px;
}

.rail-edge {
  width: 6px;
  height: 42px;
  background: #d0d0d0;
}

.rail-tab {
  display: flex;
  flex-direction: column;
  align-items: center;
  height: 42px;
}

.rail-tab span {
  writing-mode: vertical-rl;
  text-orientation: sideways;
  line-height: 16px;
}

.panel {
  display: flex;
  flex-direction: column;
  min-width: 0;
  padding-bottom: 1px;
}

.panel-head {
  display: flex;
  align-items: center;
  gap: 10px;
  height: 24px;
  padding: 0 6px 4px 4px;
}

.panel-head h2 {
  flex: 1;
  margin: 0;
  font-size: 13px;
  font-weight: normal;
}

.panel-tools {
  display: flex;
  gap: 4px;
  padding-bottom: 3px;
  background: #f0f0f0;
}

.panel-tools button {
  display: flex;
  align-items: center;
  justify-content: center;
  width: 24px;
  height: 24px;
  border: 1px solid #b5b5b5;
}

.scope {
  flex: none;
  width: 160px;
  height: 26px;
  padding: 0 6px 0 3px;
}

.scope select {
  color: #333;
  font-size: 13px;
}

.props-wrap {
  flex: 1;
  display: flex;
  flex-direction: column;
  padding: 1px;
  border: 1px solid #d5d5d5;
  background: #fff;
}

.props {
  flex: 1;
  width: 100%;
  height: 558px;
  border-collapse: collapse;
  table-layout: fixed;
}

.col-name {
  width: 109px;
}

.props th {
  height: 19px;
  padding: 0 0 0 3px;
  border: 1px solid #cacaca;
  border-width: 1px 1px 1px 0;
  background: #f0f0f0;
  font-size: 12px;
  line-height: 17px;
  font-weight: normal;
  text-align: left;
}

.props td {
  height: 16px;
  padding: 0 0 0 19px;
  border-bottom: 1px solid #cacaca;
  font-size: 12px;
  line-height: 14px;
  vertical-align: middle;
}

.props td + td {
  padding-left: 3px;
  border-left: 1px solid #cacaca;
  font-family: "Liberation Mono", monospace;
  font-size: 10px;
}

.props td span {
  font: 12px/14px "Noto Sans CJK SC", sans-serif;
  vertical-align: middle;
}

.props .section td {
  font-size: 13px;
  font-weight: bold;
  background: linear-gradient(135deg, transparent 50%, #999 50%) 6px 5px / 6px 6px no-repeat;
}

.props .on,
.props td.on {
  color: #000;
}

.props .off {
  color: #aaa;
}

.props .rest td {
  height: auto;
}

.props td.swatched {
  padding-left: 1px;
}

.line {
  display: inline-block;
  width: 48px;
  height: 1px;
  margin: 0 5px 3px 1px;
  border: 0;
  background: #000;
}

.line.thin {
  background: #ccc;
}

.swatch {
  display: inline-block;
  width: 12px;
  height: 12px;
  margin-right: 1px;
  border: 1px solid #000;
  vertical-align: middle;
}

.hint {
  height: 55px;
  border-top: 4px solid #f0f0f0;
  background: linear-gradient(#bdbdbd 1px, #efefef 1px);
}

.splitter {
  border: solid #e6e6e6;
  border-width: 0 1px 0 2px;
  background: #dcdcdc;
}

/* documents */
.docs {
  display: flex;
  flex-direction: column;
  min-width: 0;
}

.doc-tabs {
  display: flex;
  height: 20px;
  border-bottom: 1px solid #e0e0e0;
}

.doc-tabs button {
  height: 20px;
  padding: 0 13px 0 16px;
  border: solid #999;
  border-width: 1px 1px 0 0;
  border-radius: 0 4px 0 0;
  background: #efefef;
}

.doc-tabs .lap {
  position: relative;
  margin-left: -17px;
}

.doc-tabs .active {
  display: flex;
  align-items: center;
  gap: 13px;
  padding-right: 5px;
  background: #fff;
  font-weight: bold;
}

.canvas {
  flex: 1;
  overflow: hidden;
  background: #000;
}

.ink {
  fill: none;
  stroke: #fff;
  shape-rendering: crispEdges;
}

.slab {
  fill: #fff;
  shape-rendering: crispEdges;
}

.holes {
  stroke: #000;
  stroke-dasharray: 1 4;
  shape-rendering: crispEdges;
}

.axis {
  stroke: #f00;
  shape-rendering: crispEdges;
}

.bores {
  fill: none;
  stroke: #fff;
}

.notes {
  fill: #a8a8a8;
  font: 6px "Noto Sans CJK SC", sans-serif;
}

.sheet-tabs {
  display: flex;
  height: 17px;
}

.nav {
  display: flex;
  align-items: center;
  justify-content: center;
  width: 16px;
}

.sheet {
  display: grid;
  grid-template-columns: 100%;
  width: 48px;
  line-height: 15px;
}

.sheet svg,
.sheet span {
  grid-area: 1 / 1;
}

.sheet svg {
  overflow: visible;
}

.sheet.active {
  width: 45px;
  font-weight: bold;
}

.nav + .sheet {
  margin-left: 1px;
}

/* command line */
.command {
  height: 27px;
  margin-left: 30px;
  padding: 2px 4px 0;
  border-top: 6px solid #cbcbcb;
}

.watermark {
  position: absolute;
  right: 13px;
  bottom: 7px;
  color: #d8d8d8;
  font: 18px/24px "Liberation Sans", sans-serif;
  text-shadow: 1px 1px 1px #555;
}
```
